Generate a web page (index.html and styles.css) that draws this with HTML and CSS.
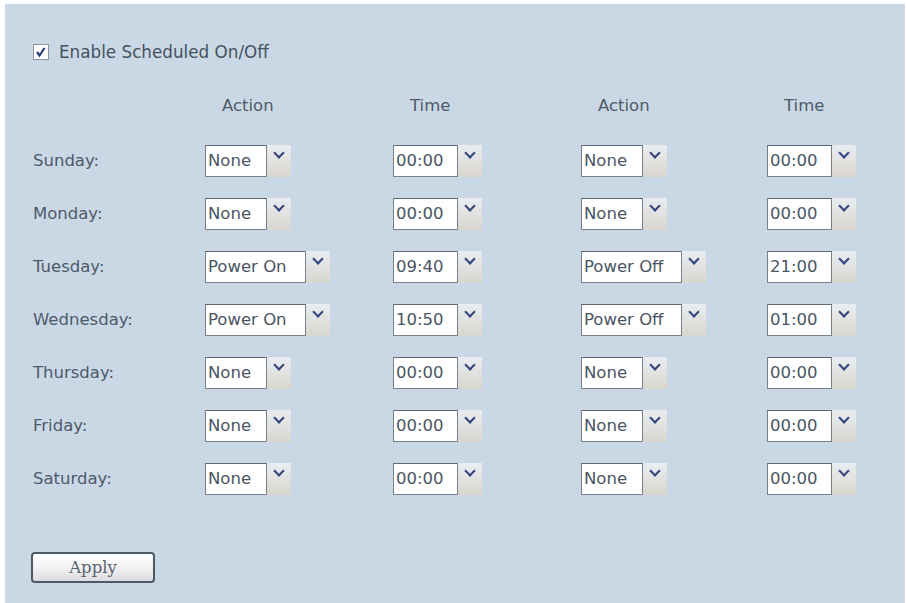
FILE: index.html
```html
<!DOCTYPE html>
<html>
<head>
<meta charset="utf-8">
<link rel="stylesheet" href="styles.css">
</head>
<body>
<div class="panel">
  <label class="enable">
    <span class="cb"><svg width="16" height="16" viewBox="0 0 16 16"><rect x="0.5" y="0.5" width="15" height="15" fill="#fff" stroke="#8a949e"/><path d="M4 8 L6.5 11.5 L11.5 4" fill="none" stroke="#2c3d78" stroke-width="2.2"/></svg></span>
    <span>Enable Scheduled On/Off</span>
  </label>

  <div class="grid">
    <div></div>
    <div class="hd">Action</div>
    <div class="hd">Time</div>
    <div class="hd">Action</div>
    <div class="hd">Time</div>

    <div class="day">Sunday:</div>
    <div><span class="sel"><span class="val w-n">None</span><span class="btn"></span></span></div>
    <div><span class="sel"><span class="val w-t">00:00</span><span class="btn"></span></span></div>
    <div><span class="sel"><span class="val w-n">None</span><span class="btn"></span></span></div>
    <div><span class="sel"><span class="val w-t">00:00</span><span class="btn"></span></span></div>

    <div class="day">Monday:</div>
    <div><span class="sel"><span class="val w-n">None</span><span class="btn"></span></span></div>
    <div><span class="sel"><span class="val w-t">00:00</span><span class="btn"></span></span></div>
    <div><span class="sel"><span class="val w-n">None</span><span class="btn"></span></span></div>
    <div><span class="sel"><span class="val w-t">00:00</span><span class="btn"></span></span></div>

    <div class="day">Tuesday:</div>
    <div><span class="sel"><span class="val w-p">Power On</span><span class="btn"></span></span></div>
    <div><span class="sel"><span class="val w-t">09:40</span><span class="btn"></span></span></div>
    <div><span class="sel"><span class="val w-p">Power Off</span><span class="btn"></span></span></div>
    <div><span class="sel"><span class="val w-t">21:00</span><span class="btn"></span></span></div>

    <div class="day">Wednesday:</div>
    <div><span class="sel"><span class="val w-p">Power On</span><span class="btn"></span></span></div>
    <div><span class="sel"><span class="val w-t">10:50</span><span class="btn"></span></span></div>
    <div><span class="sel"><span class="val w-p">Power Off</span><span class="btn"></span></span></div>
    <div><span class="sel"><span class="val w-t">01:00</span><span class="btn"></span></span></div>

    <div class="day">Thursday:</div>
    <div><span class="sel"><span class="val w-n">None</span><span class="btn"></span></span></div>
    <div><span class="sel"><span class="val w-t">00:00</span><span class="btn"></span></span></div>
    <div><span class="sel"><span class="val w-n">None</span><span class="btn"></span></span></div>
    <div><span class="sel"><span class="val w-t">00:00</span><span class="btn"></span></span></div>

    <div class="day">Friday:</div>
    <div><span class="sel"><span class="val w-n">None</span><span class="btn"></span></span></div>
    <div><span class="sel"><span class="val w-t">00:00</span><span class="btn"></span></span></div>
    <div><span class="sel"><span class="val w-n">None</span><span class="btn"></span></span></div>
    <div><span class="sel"><span class="val w-t">00:00</span><span class="btn"></span></span></div>

    <div class="day">Saturday:</div>
    <div><span class="sel"><span class="val w-n">None</span><span class="btn"></span></span></div>
    <div><span class="sel"><span class="val w-t">00:00</span><span class="btn"></span></span></div>
    <div><span class="sel"><span class="val w-n">None</span><span class="btn"></span></span></div>
    <div><span class="sel"><span class="val w-t">00:00</span><span class="btn"></span></span></div>
  </div>

  <button class="apply">Apply</button>
</div>
</body>
</html>
```
FILE: styles.css
```css
html, body {
  margin: 0;
  padding: 0;
  background: #ffffff;
}
body {
  font-family: "DejaVu Sans", "Liberation Sans", sans-serif;
  font-size: 16.5px;
  color: #4e5a68;
}
.panel {
  margin: 4px 1px 0 5px;
  height: 599px;
  box-sizing: border-box;
  background: #cad8e6;
  padding: 38px 0 0 28px;
}
.enable {
  display: flex;
  align-items: center;
  gap: 10px;
  height: 20px;
  font-size: 16.8px;
  color: #45525f;
}
.cb {
  display: flex;
}
.grid {
  display: grid;
  grid-template-columns: 172px 188px 188px 186px 100px;
  grid-template-rows: 40px repeat(7, 53px);
  align-items: center;
  margin-top: 32px;
}
.grid > .hd {
  align-self: start;
  line-height: 24px;
  padding-left: 17px;
}
.day {
  color: #4e5a68;
}
.sel {
  display: inline-flex;
  height: 32px;
  vertical-align: middle;
}
.val {
  box-sizing: border-box;
  height: 32px;
  line-height: 30px;
  background: #fff;
  border: 1px solid #76818b;
  border-top-color: #5f6a74;
  padding-left: 2px;
  color: #4a5563;
  font-size: 16.5px;
  white-space: nowrap;
  overflow: hidden;
}
.w-n { width: 62px; }
.w-t { width: 65px; }
.w-p { width: 101px; }
.btn {
  width: 24px;
  height: 32px;
  background: linear-gradient(#e9edf1, #d9d6cf);
  position: relative;
}
.btn::after {
  content: "";
  position: absolute;
  left: 8px;
  top: 4px;
  width: 6px;
  height: 6px;
  border-right: 2px solid #34437c;
  border-bottom: 2px solid #34437c;
  transform: rotate(45deg) scaleY(1);
}
.apply {
  display: block;
  margin-top: 47px;
  margin-left: -2px;
  width: 124px;
  height: 31px;
  border: 2px solid #4d5a66;
  border-radius: 4px;
  background: linear-gradient(#ffffff, #f1f1f3 50%, #dcdde0);
  font-family: "DejaVu Serif", "Liberation Serif", serif;
  font-size: 16.5px;
  color: #59636e;
  padding: 0;
}
```
